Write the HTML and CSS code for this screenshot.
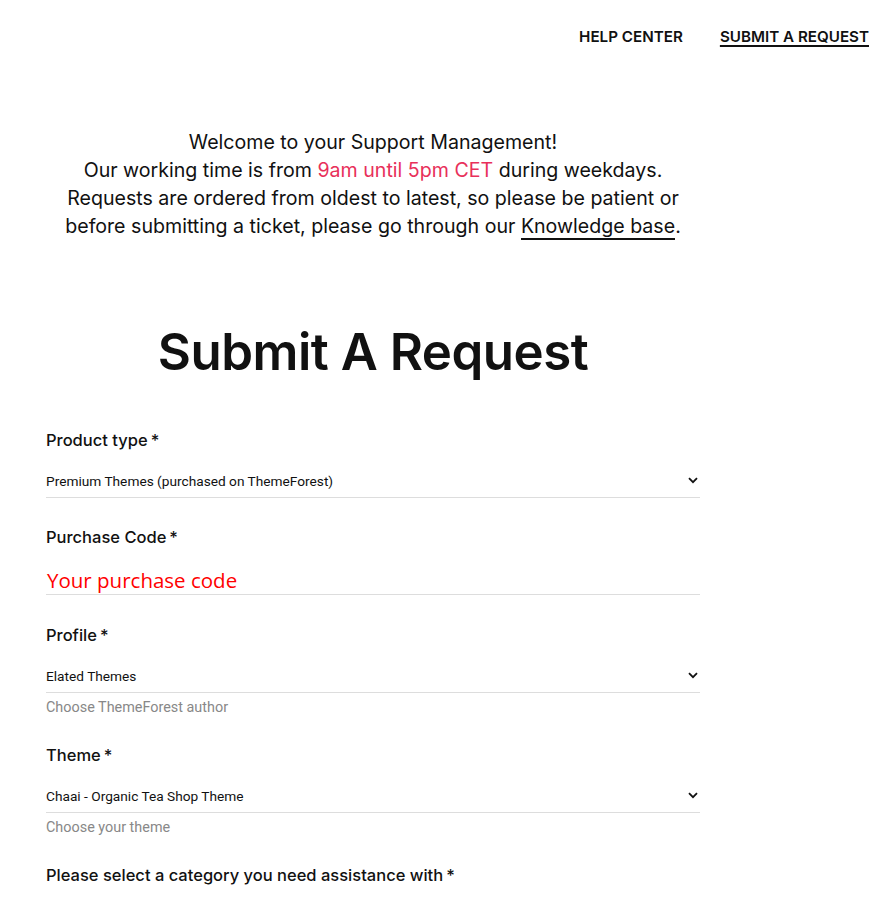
FILE: index.html
```html
<!DOCTYPE html>
<html lang="en">
<head>
<meta charset="utf-8">
<title>Submit A Request</title>
<link rel="stylesheet" href="styles.css">
</head>
<body>
<header class="topbar">
  <nav class="nav">
    <a class="nav-link" href="#">HELP CENTER</a>
    <a class="nav-link active" href="#">SUBMIT A REQUEST</a>
  </nav>
</header>
<main class="page">
  <section class="intro">
    <p>Welcome to your Support Management!<br>
    Our working time is from <span class="accent">9am until 5pm CET</span> during weekdays.<br>
    Requests are ordered from oldest to latest, so please be patient or<br>
    before submitting a ticket, please go through our <a href="#" class="kb">Knowledge base</a>.</p>
  </section>
  <h1 class="title">Submit A Request</h1>
  <form class="form">
    <div class="field">
      <label class="label">Product type<span class="req">*</span></label>
      <div class="select">
        <span class="select-value">Premium Themes (purchased on ThemeForest)</span>
        <svg class="chev" width="10" height="7" viewBox="0 0 10 7"><path d="M1 1.2 L5 5.2 L9 1.2" fill="none" stroke="#111" stroke-width="1.8"/></svg>
      </div>
    </div>
    <div class="field field-input">
      <label class="label">Purchase Code<span class="req">*</span></label>
      <div class="input"><span class="placeholder">Your purchase code</span></div>
    </div>
    <div class="field">
      <label class="label">Profile<span class="req">*</span></label>
      <div class="select">
        <span class="select-value">Elated Themes</span>
        <svg class="chev" width="10" height="7" viewBox="0 0 10 7"><path d="M1 1.2 L5 5.2 L9 1.2" fill="none" stroke="#111" stroke-width="1.8"/></svg>
      </div>
      <p class="hint">Choose ThemeForest author</p>
    </div>
    <div class="field">
      <label class="label">Theme<span class="req">*</span></label>
      <div class="select">
        <span class="select-value">Chaai - Organic Tea Shop Theme</span>
        <svg class="chev" width="10" height="7" viewBox="0 0 10 7"><path d="M1 1.2 L5 5.2 L9 1.2" fill="none" stroke="#111" stroke-width="1.8"/></svg>
      </div>
      <p class="hint">Choose your theme</p>
    </div>
    <div class="field">
      <label class="label">Please select a category you need assistance with<span class="req">*</span></label>
    </div>
  </form>
</main>
</body>
</html>
```
FILE: styles.css
```css
html, body {
  margin: 0;
  padding: 0;
  background: #fff;
  color: #111;
  font-family: "Inter", "Lato", sans-serif;
}
.topbar {
  display: flex;
  justify-content: flex-end;
  padding: 28px 15px 0 0;
  height: 30px;
}
.nav {
  display: flex;
  gap: 37px;
  align-items: flex-start;
}
.nav-link {
  font-size: 15.2px;
  font-weight: 600;
  color: #111;
  text-decoration: none;
  line-height: 18px;
}
.nav-link.active {
  text-decoration: underline;
  text-decoration-thickness: 2px;
  text-underline-offset: 3px;
}
.page {
  width: 654px;
  margin-left: 46px;
}
.intro {
  text-align: center;
  margin-top: 70px;
}
.intro p {
  margin: 0;
  font-size: 19.6px;
  line-height: 28px;
  color: #111;
}
.accent { color: #e8305a; }
.kb {
  color: #111;
  text-decoration: none;
  border-bottom: 2px solid #111;
}
.title {
  text-align: center;
  font-size: 51px;
  font-weight: 600;
  margin: 80px 0 0;
  line-height: 64px;
  letter-spacing: -0.5px;
}
.form {
  margin-top: 44px;
}
.field {
  margin-bottom: 27px;
}
.field-input {
  margin-bottom: 28px;
}
.label {
  display: block;
  font-size: 16.5px;
  font-weight: 500;
  line-height: 24px;
  color: #111;
}
.req { margin-left: 3px; }
.select {
  display: flex;
  justify-content: space-between;
  align-items: center;
  height: 34px;
  margin-top: 12px;
  border-bottom: 1px solid #ddd;
  box-sizing: border-box;
  padding-right: 2px;
}
.select-value {
  font-family: "Roboto", sans-serif;
  font-size: 13.7px;
  color: #111;
}
.input {
  height: 46px;
  border-bottom: 1px solid #ddd;
  box-sizing: border-box;
  padding-top: 19px;
}
.placeholder {
  display: block;
  font-family: "Open Sans", sans-serif;
  font-size: 20.5px;
  line-height: 24px;
  color: #f00;
  padding-left: 1px;
}
.hint {
  margin: 6px 0 -1px;
  font-family: "Roboto", sans-serif;
  font-size: 14.4px;
  color: #888;
  line-height: 18px;
}
```
